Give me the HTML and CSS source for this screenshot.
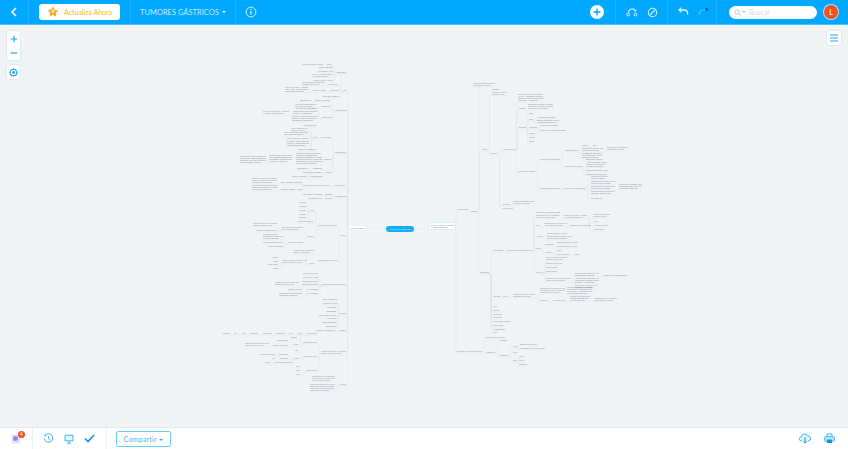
FILE: index.html
```html
<!DOCTYPE html>
<html lang="es">
<head>
<meta charset="utf-8">
<title>Tumores gástricos</title>
<link rel="stylesheet" href="styles.css">
</head>
<body>
<header class="topbar">
  <div class="sec sec-back">
    <svg class="ic" width="10" height="12" viewBox="0 0 10 12"><path d="M7 2 3 6l4 4" fill="none" stroke="#fff" stroke-width="1.500"/></svg>
  </div>
  <div class="sec sec-upgrade">
    <button class="upgrade">
      <svg width="12" height="12" viewBox="0 0 12 12"><path d="M6 .5l1.700 3.500 3.800.5-2.800 2.600.7 3.900L6 8.700 2.600 10.500l.7-3.900L.5 4l3.800-.5z" fill="#f9a825"/><path d="M6 3.200v4M4.400 5h3.200" stroke="#fff" stroke-width=".9"/></svg>
      <span>Actualiza Ahora</span>
    </button>
  </div>
  <div class="sec sec-title">
    <span class="title">TUMORES GÁSTRICOS</span><i class="caret"></i>
  </div>
  <div class="sec sec-info">
    <svg width="12" height="12" viewBox="0 0 12 12"><circle cx="6" cy="6" r="4.900" fill="none" stroke="#d4f0ff" stroke-width="1"/><path d="M6 3v1M6 5v3.400" stroke="#d4f0ff" stroke-width="1.300"/></svg>
  </div>
  <div class="sec sec-add">
    <span class="add"><svg width="8" height="8" viewBox="0 0 8 8"><path d="M4 .5v7M.5 4h7" stroke="#00a8ff" stroke-width="1.400"/></svg></span>
  </div>
  <div class="sec sec-tools">
    <svg width="12" height="10" viewBox="0 0 12 10"><path d="M2.400 5.500C3 1.500 8 .5 9.500 4" fill="none" stroke="#d4f0ff" stroke-width="1.100"/><path d="M8 3.500l1.600 1 .8-1.800" fill="none" stroke="#d4f0ff" stroke-width=".7"/><circle cx="2.200" cy="7.500" r="1.400" fill="none" stroke="#d4f0ff" stroke-width="1"/><circle cx="9.500" cy="7.500" r="1.400" fill="none" stroke="#d4f0ff" stroke-width="1"/></svg>
    <svg width="11" height="11" viewBox="0 0 11 11"><circle cx="5.500" cy="5.500" r="4.200" fill="none" stroke="#d4f0ff" stroke-width="1.100"/><path d="M2.500 8.500l6-6" stroke="#d4f0ff" stroke-width="1.100"/></svg>
  </div>
  <div class="sec sec-history">
    <svg width="11" height="10" viewBox="0 0 11 10"><path d="M1.500 3H6.500c2.500 0 3.500 2 3 4.500" fill="none" stroke="#e6f6ff" stroke-width="1.300"/><path d="M3.500 .6 1 3l2.500 2.400" fill="none" stroke="#e6f6ff" stroke-width="1.100"/></svg>
    <svg width="11" height="10" viewBox="0 0 11 10"><path d="M1.500 8C1 5 2.500 3 5 3h3.500" fill="none" stroke="#55c6ff" stroke-width="1.200"/><path d="M7.500 1h2.500v3h-2.500z" fill="#0d5f9e"/></svg>
  </div>
  <div class="sec sec-search">
    <label class="search">
      <svg width="7" height="7" viewBox="0 0 7 7"><circle cx="3" cy="3" r="2.200" fill="none" stroke="#b8c4cc" stroke-width=".9"/><path d="M4.600 4.600 6.700 6.700" stroke="#b8c4cc"/></svg>
      <i class="caret caret-grey"></i>
      <span>Buscar</span>
    </label>
  </div>
  <div class="avatar">L</div>
</header>

<main class="stage">
  <svg id="map" class="map" viewBox="0 25 848 402" width="848" height="402"></svg>
  <div class="floater zoom">
    <svg width="8" height="8" viewBox="0 0 8 8"><path d="M4 .8v6.400M.8 4h6.400" stroke="#1aa9f5" stroke-width="1.200"/></svg>
    <svg width="8" height="8" viewBox="0 0 8 8"><path d="M.8 4h6.400" stroke="#1aa9f5" stroke-width="1.200"/></svg>
  </div>
  <div class="floater locate">
    <svg width="9" height="9" viewBox="0 0 9 9"><circle cx="4.500" cy="4.500" r="3.300" fill="none" stroke="#1aa9f5" stroke-width="1.100"/><circle cx="4.500" cy="4.500" r="1.400" fill="#1aa9f5"/><path d="M4.500 0v1.200M4.500 7.800V9M0 4.500h1.200M7.800 4.500H9" stroke="#1aa9f5" stroke-width=".8"/></svg>
  </div>
  <div class="floater menu">
    <svg width="8" height="8" viewBox="0 0 8 8"><path d="M0 1h8M0 4h8M0 7h8" stroke="#1aa9f5" stroke-width="1"/></svg>
  </div>
</main>

<footer class="bottombar">
  <div class="bsec bsec-app">
    <span class="app"><svg width="10" height="10" viewBox="0 0 8 8"><rect x=".5" y=".5" width="7" height="7" rx="1.500" fill="#e3ddf7"/><rect x="1.800" y="1.800" width="3.600" height="3.600" rx="1" fill="#9a7fe8"/></svg><b class="badge">4</b></span>
  </div>
  <div class="bsec bsec-tools">
    <svg width="11" height="11" viewBox="0 0 11 11"><path d="M2 2.500A4.300 4.300 0 1 1 1.200 5.500" fill="none" stroke="#3cb4f5" stroke-width="1"/><path d="M.8 1.500 2 3.200l1.700-.6" fill="none" stroke="#3cb4f5" stroke-width=".8"/><path d="M5.500 3v2.700l1.700 1" fill="none" stroke="#3cb4f5" stroke-width=".9"/></svg>
    <svg width="10" height="10" viewBox="0 0 10 10"><path d="M1 1.200h8v5.600H1z" fill="#e3f5ff" stroke="#3cb4f5" stroke-width="1"/><path d="M5 7v2M3 9.200h4" stroke="#3cb4f5" stroke-width="1"/></svg>
    <svg width="11" height="9" viewBox="0 0 11 9"><path d="M1 4.500 4 7.500 10 1" fill="none" stroke="#1094ea" stroke-width="1.700"/></svg>
  </div>
  <div class="bsec bsec-share">
    <button class="share">Compartir<i class="caret caret-blue"></i></button>
  </div>
  <div class="bsec bsec-out">
    <svg width="12" height="11" viewBox="0 0 12 11"><path d="M3 8H2.500A2 2 0 0 1 2.300 4 3.200 3.200 0 0 1 8.500 3 2.500 2.500 0 0 1 9.500 8H9" fill="#e3f5ff" stroke="#3cb4f5" stroke-width="1"/><path d="M6 4v6M4.300 8.300 6 10l1.700-1.700" fill="none" stroke="#1094ea" stroke-width="1"/></svg>
    <svg width="11" height="11" viewBox="0 0 11 11"><path d="M3 3.500V1h5v2.500" fill="#fff" stroke="#3cb4f5"/><rect x=".6" y="3.500" width="9.800" height="4.800" rx="1" fill="#b7e4fc" stroke="#3cb4f5" stroke-width=".9"/><rect x="3" y="6.500" width="5" height="3.500" fill="#1094ea"/></svg>
  </div>
</footer>
<script src="map.js"></script>
</body>
</html>
```
FILE: styles.css
```css
* { box-sizing: border-box; }
html, body { margin: 0; height: 449px; overflow: hidden; }
body {
  display: flex; flex-direction: column; width: 848px;
  background: #f0f4f7;
  font-family: Lato, "Liberation Sans", sans-serif;
}
.topbar {
  flex: none; height: 25px; display: flex; align-items: stretch;
  background: #00a8ff; border-bottom: 1px solid #4dc2ff;
}
.sec { display: flex; align-items: center; border-right: 1px solid #19b0ff; }
.sec-back { width: 29px; justify-content: center; }
.sec-upgrade { width: 102px; padding-left: 10px; }
.upgrade {
  width: 81px; height: 16px; padding: 0 0 0 8px; display: flex; align-items: center; gap: 5px;
  background: #fff; border: 0; border-radius: 3px;
  color: #f9b53a; font: 7px Lato, "Liberation Sans", sans-serif; white-space: nowrap;
}
.sec-title { width: 105px; padding-left: 9px; color: #c4ebff; font-size: 7.500px; }
.title { white-space: nowrap; }
.caret {
  display: inline-block; width: 0; height: 0; margin-left: 3px;
  border: 2px solid transparent; border-top: 2.500px solid #e6f6ff; border-bottom: 0;
}
.caret-grey { border-top-color: #b8c4cc; margin: 0 2px 0 0; }
.caret-blue { border-top-color: #2aa9f0; margin-left: 2.500px; vertical-align: 1px; }
.sec-info { width: 354px; padding-left: 9px; border-right: 0; }
.sec-add { width: 26px; }
.add {
  width: 14px; height: 14px; display: flex; align-items: center; justify-content: center;
  border-radius: 50%; background: #fff;
}
.sec-tools { width: 52px; padding-left: 10px; gap: 9px; }
.sec-history { width: 49px; padding-left: 10px; gap: 9px; }
.sec-search { width: 100px; padding-left: 12px; border-right: 0; }
.search {
  width: 88px; height: 13px; padding-left: 5px; display: flex; align-items: center; gap: 1px;
  border-radius: 7px; background: #fff; color: #d3dade; font-size: 7px;
}
.avatar {
  width: 14px; height: 14px; margin: 5px 0 0 7px; display: flex; align-items: center; justify-content: center;
  border-radius: 50%; background: #f4511e; box-shadow: 0 0 0 1px #b6dff5;
  color: #ffe9e0; font-size: 7px; font-weight: 700;
}
.stage { flex: none; height: 402px; position: relative; }
.map { position: absolute; left: 0; top: 0; display: block; }
.map .lk { fill: none; stroke: #dfe5e9; stroke-width: .5; }
.map .ul { stroke: #e0e6ea; stroke-width: .4; }
.map text { font: 2px "Liberation Sans", sans-serif; fill: #7f888f; }
.map .pill { fill: #12acff; }
.map .pilltxt { fill: #d9f3ff; font-size: 2.300px; }
.map .box { fill: #fff; stroke: #e2e8ec; stroke-width: .4; }
.map .box-sel { stroke: #bfe6fb; stroke-width: .6; }
.floater {
  position: absolute; display: flex; flex-direction: column; align-items: center; justify-content: center;
  background: #fff; border-radius: 2px; box-shadow: 0 0 2px rgba(90,110,125,.28);
}
.zoom { left: 7px; top: 6px; width: 13px; height: 29px; gap: 6px; }
.locate { left: 7px; top: 40px; width: 13px; height: 14px; }
.menu { left: 827px; top: 6px; width: 14px; height: 14px; }
.bottombar {
  flex: none; height: 22px; display: flex; align-items: stretch;
  background: #fff; border-top: 1px solid #e4e9ec;
}
.bsec { display: flex; align-items: center; }
.bsec-app { width: 33px; border-right: 1px solid #f0f3f5; padding-left: 11px; }
.app { position: relative; display: block; width: 10px; height: 10px; }
.app svg { display: block; }
.badge {
  position: absolute; left: 7px; top: -3px; width: 7px; height: 7px;
  display: flex; align-items: center; justify-content: center;
  border-radius: 50%; background: #f4511e; color: #fff; font-size: 5px; font-weight: 400;
}
.bsec-tools { width: 74px; padding-left: 10px; gap: 10px; border-right: 1px solid #f0f3f5; }
.bsec-share { flex: 1; padding-left: 9px; }
.share {
  width: 55px; height: 16px; padding: 0; background: #fff;
  border: 1px solid #6acbff; border-radius: 2px;
  color: #45b5f2; font: 7px Lato, "Liberation Sans", sans-serif; letter-spacing: .2px;
}
.bsec-out { gap: 13px; padding-right: 13px; }
```
FILE: map.js
```js
// Mind map data: [x1, x2, y, "text (| separates lines)", children]
function n(a, b, y, t, k) { return { a: a, b: b, y: y, t: t, k: k || [] }; }

var left = n(349, 366, 228, "", [
  n(342.5, 346.5, 92, "Anatomía", [
    n(337, 346, 74, "Estómago", [
      n(327, 332, 66, "Tipo 1", [n(302, 323, 66, "Mucosa, submucosa, muscular")]),
      n(319, 333, 69, "Cardias y fondo gástrico"),
      n(318, 333, 73, "Cuerpo gástrico y antro"),
      n(312, 333, 77.500, "Píloro y curvatura mayor|y curvatura menor"),
      n(314, 333, 82, "Epiplón menor y mayor")
    ]),
    n(328, 338, 86, "Vascularización", [n(301, 324, 86, "Arteria gástrica izquierda|y gastroepiploica")]),
    n(330, 339, 92, "Inervación", [n(313, 326, 92, "Nervio vago", [n(285, 308, 93, "Plexo celiaco y ramas|de los nervios|esplácnicos")])]),
    n(323, 339, 98, "Drenaje linfático")
  ]),
  n(335, 347, 112, "Histología", [
    n(315, 330, 102, "Capa mucosa", [n(300, 311, 102, "Epitelio")]),
    n(321, 330, 108, "Glándulas", [n(295, 317, 108, "Células parietales y|células principales")]),
    n(322, 332, 119, "Submucosa", [
      n(296, 317, 110, "Plexo de Meissner"),
      n(293, 317, 115, "Capa muscular oblicua|circular y longitudinal", [n(263, 289, 115, "Plexo mientérico de Auerbach|y células intersticiales")]),
      n(292, 318, 122, "Serosa y tejido conectivo|laxo con vasos y|ganglios linfáticos")
    ])
  ]),
  n(335, 346, 154, "Fisiología", [
    n(321, 331, 139, "Secreción gástrica", [
      n(313, 317, 139, "Fases", [
        n(303, 316, 127, "Fase cefálica vagal"),
        n(291, 308, 131.700, "Fase gástrica por|distensión y gastrina"),
        n(284, 308, 136, "Fase intestinal inhibición|por secretina"),
        n(286, 308, 140, "Ácido clorhídrico y pepsina"),
        n(287, 309, 146.500, "Factor intrínseco|moco y bicarbonato|protección"),
        n(298, 316, 151, "Absorción de vitamina B12")
      ])
    ]),
    n(324, 331, 161, "Motilidad", [
      n(296, 322, 157, "Vaciamiento gástrico y|ondas peristálticas"),
      n(296, 322, 165, "Ondas lentas de Cajal|contracciones tónicas|relajación receptiva|del fondo gástrico", [
        n(269, 292, 163, "Regulación hormonal|colecistoquinina|péptido inhibidor|motilina y ghrelina", [
          n(240, 266, 164, "Receptores de distensión|reflejos vagovagales|sistema nervioso entérico|coordinación motora")
        ])
      ])
    ]),
    n(313, 322, 170, "Gastrina", [n(297, 308, 170, "Células G")]),
    n(324, 331, 174, "Hormonas", [n(303, 322, 174, "Somatostatina e histamina"), n(310, 322, 178, "Leptina", [n(292, 307, 178, "Grelina y obestatina")])])
  ]),
  n(335, 345, 187, "Epidemiología", [
    n(303, 330, 187, "Incidencia por regiones y sexo", [
      n(280, 302, 184, "Asia oriental y Europa", [n(252, 277, 184, "Mayor incidencia en Japón|Corea y China con tamizaje|poblacional endoscópico")]),
      n(280, 302, 191, "América Latina y África", [n(252, 277, 191, "Menor supervivencia por|diagnóstico tardío y falta|de acceso a tratamiento")])
    ])
  ]),
  n(335, 346, 198, "Factores", [
    n(325, 332, 196, "Dieta", [n(303, 322, 196, "Sal, nitratos y ahumados")]),
    n(325, 332, 200, "Infección", [n(308, 322, 200, "Helicobacter pylori")])
  ]),
  n(341, 346, 237, "Clasificación", [
    n(318, 337, 227, "Clasificación de Borrmann", [
      n(310, 314, 212, "Tipos", [
        n(299, 306, 204, "Polipoide"), n(299, 306, 208, "Fungoide"), n(299, 306, 212, "Ulcerado"),
        n(299, 306, 215.500, "Infiltrante"), n(299, 306, 219, "Difuso"), n(297, 313, 223, "Linitis plástica gástrica")
      ]),
      n(307, 314, 238, "Lauren", [
        n(281, 303, 231, "Adenocarcinoma intestinal|con formación glandular", [
          n(253, 277, 227, "Células cohesivas que forman|glándulas en pacientes mayores"),
          n(256, 277, 232, "Asociado a gastritis atrófica"),
          n(263, 277, 236, "Metaplasia intestinal")
        ]),
        n(288, 303, 244, "Adenocarcinoma difuso", [
          n(263, 283, 240, "Células en anillo de|sello sin cohesión"),
          n(263, 283, 244, "Pacientes más jóvenes"),
          n(268, 283, 248, "Peor pronóstico")
        ])
      ])
    ]),
    n(318, 337, 262, "Clasificación de la OMS", [
      n(309, 314, 265, "Tipos", [
        n(293, 314, 254, "Adenocarcinoma tubular|papilar y mucinoso"),
        n(282, 307, 264, "Carcinoma poco cohesivo con|células en anillo de sello", [
          n(272, 278, 259, "Linfoma"), n(273, 278, 262.500, "GIST"), n(268, 278, 266, "Carcinoide"), n(273, 278, 269.500, "Otros")
        ])
      ])
    ])
  ]),
  n(322, 346, 286, "Estadificación TNM del cáncer gástrico", [
    n(303, 318, 275, "Tis carcinoma in situ"),
    n(303, 318, 279, "T1 lámina propia y mucosa"),
    n(302, 318, 282.500, "T2 muscular propia"),
    n(302, 318, 286, "T3 subserosa", [n(275, 299, 286, "Invasión de tejido conectivo|subseroso sin peritoneo")]),
    n(307, 318, 291, "T4 serosa", [n(288, 302, 291, "Estructuras adyacentes")]),
    n(306, 318, 295, "N y M ganglios", [n(279, 302, 297, "Ganglios regionales|metástasis a distancia")])
  ]),
  n(340, 346, 315, "Diagnóstico", [
    n(323, 337, 301, "Dolor epigástrico"), n(323, 337, 305, "Pérdida de peso"),
    n(327, 336, 309, "Anemia"), n(327, 336, 313, "Disfagia"),
    n(319, 336, 316.500, "Saciedad temprana y náuseas"), n(327, 336, 320, "Hematemesis"),
    n(322, 336, 324, "Masa abdominal"), n(326, 336, 328, "Endoscopia")
  ]),
  n(339, 346, 331.500, "Imagen", [n(316, 335, 331.500, "Tomografía y ecoendoscopia")]),
  n(321, 346, 355, "Tratamiento quirúrgico y oncológico|según el estadio del tumor", [
    n(303, 317, 344, "Gastrectomía total", [
      n(307, 317, 335, "Quimioterapia", [
        n(298, 302, 335, "Taxol", [n(289, 293, 335, "5-FU", [n(276, 285, 335, "Cisplatino", [n(263, 272, 335, "Oxaliplatino", [n(250, 258, 335, "Capecitabina", [n(242, 246, 335, "FLOT", [n(234, 237, 335, "ECF", [n(223, 230, 335, "Docetaxel")])])])])])])])
      ]),
      n(291, 297, 339, "Subtotal"),
      n(293, 298, 346, "Linfadenectomía", [
        n(277, 288, 342, "Resección D1"),
        n(273, 288, 347, "Disección D2 ganglionar", [n(245, 269, 347, "Márgenes libres de tumor con|reconstrucción en Y de Roux")])
      ])
    ]),
    n(304, 317, 358, "Terapia adyuvante", [
      n(295, 298, 352, "HER2"),
      n(294, 299, 360, "Dirigida", [
        n(279, 288, 356, "Trastuzumab", [n(259, 275, 356, "Anticuerpo monoclonal")]),
        n(280, 288, 360, "Ramucirumab", [n(272, 275, 360, "VEGF")]),
        n(274, 292, 364, "Inmunoterapia pembrolizumab", [n(265, 270, 364, "PD-1")])
      ])
    ]),
    n(306, 317, 372, "Cuidados paliativos", [n(296, 300, 368, "Stent"), n(296, 300, 372, "Dolor"), n(296, 300, 376, "Nutrición")])
  ]),
  n(340, 346, 386, "Pronóstico", [
    n(312, 335, 382, "Supervivencia a cinco años según|estadio clínico y patológico del|tumor al momento del diagnóstico"),
    n(310, 335, 392, "Factores pronósticos como invasión|ganglionar, margen quirúrgico,|respuesta a quimioterapia y|estado funcional del paciente")
  ])
]);

var right = n(429, 455, 226, "", [
  n(457, 468, 211, "Adenocarcinoma", [
    n(471, 477, 213, "Tipos", [
      n(473, 495, 87, "Carcinoma gástrico temprano|y avanzado con subtipos"),
      n(482, 487, 151, "Causas", [
        n(492, 499, 91, "Genéticas"),
        n(492, 507, 95.500, "Mutaciones en CDH1 y|síndrome de Lynch"),
        n(490, 497, 155, "Ambientales", [
          n(503, 515, 151, "Factores de riesgo", [
            n(518, 543, 102, "Infección por Helicobacter|pylori y gastritis crónica|atrófica con metaplasia|intestinal y displasia"),
            n(519, 526, 110, "Tabaco", [n(528, 553, 110, "Consumo de tabaco y alcohol|asociado a mayor riesgo|de tumores del cardias")]),
            n(519, 526, 129, "Dieta", [
              n(529, 533, 115, "Sal"),
              n(529, 533, 121, "Nitritos", [n(537, 555, 119, "Alimentos ahumados"), n(537, 560, 123.500, "Baja ingesta de frutas y|verduras frescas")]),
              n(529, 537, 129, "Obesidad", [n(540, 558, 127, "Reflujo gastroesofágico"), n(540, 566, 132, "Tumores de la unión gastroesofágica")]),
              n(529, 535, 135, "Cirugía"), n(529, 535, 139, "Radiación"), n(529, 534, 143, "Edad")
            ]),
            n(518, 535, 173, "Lesiones precursoras", [
              n(540, 560, 161, "Pólipos adenomatosos", [
                n(565, 577, 152, "Metaplasia", [
                  n(582, 588, 147, "Completa", [n(593, 597, 147, "Tipo I")]),
                  n(582, 603, 152, "Incompleta con células|caliciformes", [n(607, 628, 151, "Mayor riesgo de progresión|a displasia de alto grado")]),
                  n(582, 602, 158.500, "Gastritis atrófica|multifocal con|hipoclorhidria")
                ]),
                n(565, 582, 168, "Displasia de alto grado", [
                  n(586, 603, 161, "Bajo grado vigilancia"),
                  n(586, 607, 167.500, "Alto grado con|atipia celular y|pérdida de polaridad"),
                  n(586, 608, 172, "Resección endoscópica mucosa"),
                  n(586, 607, 175.500, "Seguimiento endoscópico")
                ])
              ]),
              n(540, 560, 190, "Úlcera gástrica crónica", [
                n(563, 585, 190, "Anemia perniciosa y gastrectomía", [
                  n(591, 608, 180, "Gastritis autoinmune|con aclorhidria"),
                  n(591, 615, 185, "Gastrectomía parcial previa|más de quince años"),
                  n(591, 615, 190, "Enfermedad de Ménétrier con|hipertrofia de pliegues", [n(619, 642, 190, "Mayor riesgo de|malignización en|mucosa gástrica")]),
                  n(591, 615, 195, "Cáncer gástrico hereditario|difuso familiar"),
                  n(591, 603, 200, "Grupo sanguíneo A")
                ])
              ])
            ])
          ]),
          n(503, 510, 206, "Exámenes", [n(513, 534, 205, "Endoscopia digestiva alta|con toma de biopsias")]),
          n(503, 513, 209.500, "Estudios de imagen")
        ])
      ]),
      n(480, 489, 274, "Benignos", [
        n(493, 503, 252, "Neoplasias", [
          n(507, 532, 252, "Tumores del estroma gastrointestinal", [
            n(536, 560, 214, "Origen en células de Cajal"),
            n(536, 560, 219, "Mutaciones en KIT y PDGFRA|en la mayoría de casos", [
              n(564, 587, 219, "Expresión de CD117 y DOG1|en inmunohistoquímica", [
                n(593, 610, 218, "Tumor submucoso con|ulceración central"),
                n(594, 598, 223, "Dolor"), n(594, 608, 227, "Hemorragia digestiva"), n(594, 604, 231, "Masa palpable")
              ])
            ]),
            n(536, 540, 227, "Riesgo", [n(544, 567, 227, "Tamaño mayor de cinco cm|y alto índice mitótico", [n(570, 591, 227, "Evaluación de metástasis")])]),
            n(536, 543, 238, "Localización", [n(547, 567, 235, "Cuerpo gástrico y fondo"), n(547, 572, 240, "Curvatura mayor en la|pared posterior gástrica")]),
            n(536, 541, 250, "Clínica", [
              n(545, 553, 246, "Síntomas", [n(557, 578, 244, "Sangrado digestivo y anemia"), n(557, 577, 248, "Saciedad temprana y dolor")]),
              n(545, 552, 254, "Hallazgos", [n(557, 561, 252, "Masa"), n(556, 569, 256, "Úlcera o umbilicación", [n(574, 579, 256, "Melena")])])
            ]),
            n(536, 543, 274, "Tratamiento", [
              n(546, 567, 261, "Resección quirúrgica con márgenes|negativos sin linfadenectomía"),
              n(546, 562, 265, "Imatinib adyuvante"),
              n(546, 557, 269, "Sunitinib segunda"),
              n(546, 557, 273, "Regorafenib"),
              n(546, 570, 282, "Seguimiento con tomografía|cada tres a seis meses", [
                n(575, 599, 276.500, "Pólipos hiperplásicos y de|glándulas fúndicas", [n(603, 627, 276.500, "Lipomas y leiomiomas gástricos")]),
                n(575, 599, 283.500, "Adenomas gástricos con|potencial maligno bajo|según el grado"),
                n(575, 597, 288.500, "Páncreas ectópico en|región antral")
              ])
            ])
          ])
        ]),
        n(493, 500, 298, "Linfomas", [
          n(503, 508, 298, "MALT", [
            n(513, 535, 298, "Linfoma de tejido linfoide|asociado a mucosas", [
              n(540, 565, 294, "Relación con la infección por|Helicobacter pylori y respuesta|a tratamiento de erradicación", [
                n(567, 592, 295, "Linfoma difuso de células B|grandes con quimioterapia|R-CHOP y radioterapia|en enfermedad localizada")
              ]),
              n(540, 547, 302, "Linfoma B", [
                n(552, 565, 302, "Alto grado clínico", [
                  n(570, 590, 302, "Masa ulcerada con|síntomas B y|elevación de LDH", [n(595, 617, 302, "Estudios de extensión|con biopsia de médula")])
                ])
              ])
            ])
          ])
        ]),
        n(493, 497, 308, "Lipoma"), n(493, 500, 312, "Carcinoide"), n(493, 502, 315.500, "Leiomioma"),
        n(493, 502, 319, "Neurinoma"), n(493, 510, 323, "Pólipos hiperplásicos"), n(493, 503, 327, "Fibromas"),
        n(493, 505, 330.500, "Hemangioma"), n(493, 497, 334, "Otros")
      ])
    ])
  ]),
  n(457, 482, 353, "Diagnóstico y tratamiento general", [
    n(486, 505, 339, "Endoscopia con biopsia"),
    n(486, 495, 354, "Tratamiento", [
      n(500, 507, 342, "Cirugía"),
      n(500, 508, 357, "Sistémico", [
        n(513, 517, 348, "Quimio", [n(520, 537, 346, "Esquema FLOT perioperatorio"), n(520, 545, 350, "Capecitabina con oxaliplatino adyuvante")]),
        n(513, 517, 354, "Radio"),
        n(513, 517, 362, "Otros", [n(519, 524, 358, "Apoyo"), n(519, 524, 362, "Nutrición"), n(519, 527, 366, "Rehabilitación")])
      ])
    ])
  ])
]);

var NS = "http://www.w3.org/2000/svg";
var map = document.getElementById("map");
function el(name, attrs, txt) {
  var e = document.createElementNS(NS, name);
  for (var k in attrs) e.setAttribute(k, attrs[k]);
  if (txt) e.textContent = txt;
  map.appendChild(e);
  return e;
}
function elbow(px, py, cx, cy, dir) {
  var mid = px + dir * Math.min(2.5, Math.abs(cx - px) / 2), r = Math.min(1.8, Math.abs(cy - py) / 2);
  var s = cy > py ? 1 : -1;
  var d = "M" + px + " " + py + "H" + mid;
  if (Math.abs(cy - py) > .3) d = "M" + px + " " + py + "Q" + mid + " " + py + " " + mid + " " + (py + s * r) + "V" + (cy - s * r) + "Q" + mid + " " + cy + " " + (mid + dir * r) + " " + cy;
  d += "H" + cx;
  el("path", { "class": "lk", d: d });
}
function drawText(nd) {
  if (!nd.t) return;
  var lines = nd.t.split("|");
  lines.forEach(function (t, i) {
    var y = nd.y - .7 - (lines.length - 1 - i) * 2.1;
    var w = nd.b - nd.a;
    el("text", { x: nd.a, y: y, textLength: i === lines.length - 1 && lines.length > 1 ? w * .8 : w, lengthAdjust: "spacingAndGlyphs" }, t);
  });
}
function walk(nd, dir) {
  if (nd.t) el("line", { "class": "ul", x1: nd.a, x2: nd.b, y1: nd.y, y2: nd.y });
  drawText(nd);
  nd.k.forEach(function (c) {
    var px = dir < 0 ? nd.a : nd.b, cx = dir < 0 ? c.b : c.a;
    elbow(px, nd.y, cx, c.y, dir);
    walk(c, dir);
  });
}
// connections from the central topic, then the two sides
el("path", { "class": "lk", d: "M366 228.500H386M413 229H429" });
walk(left, -1);
walk(right, 1);
el("rect", { "class": "box", x: 348.500, y: 225.500, width: 18, height: 4.500, rx: 1 });
el("text", { x: 350.500, y: 228.800, textLength: 14, lengthAdjust: "spacingAndGlyphs" }, "Generalidades");
el("rect", { "class": "box box-sel", x: 428.500, y: 222.500, width: 27, height: 7, rx: 1 });
el("text", { x: 430, y: 225.500, textLength: 24, lengthAdjust: "spacingAndGlyphs" }, "Tumores gástricos malignos");
el("text", { x: 430, y: 228, textLength: 18, lengthAdjust: "spacingAndGlyphs" }, "y benignos");
el("rect", { "class": "pill", x: 386, y: 226, width: 28, height: 6, rx: 3 });
el("text", { "class": "pilltxt", x: 390, y: 229.800, textLength: 20, lengthAdjust: "spacingAndGlyphs" }, "Tumores gástricos");
```
